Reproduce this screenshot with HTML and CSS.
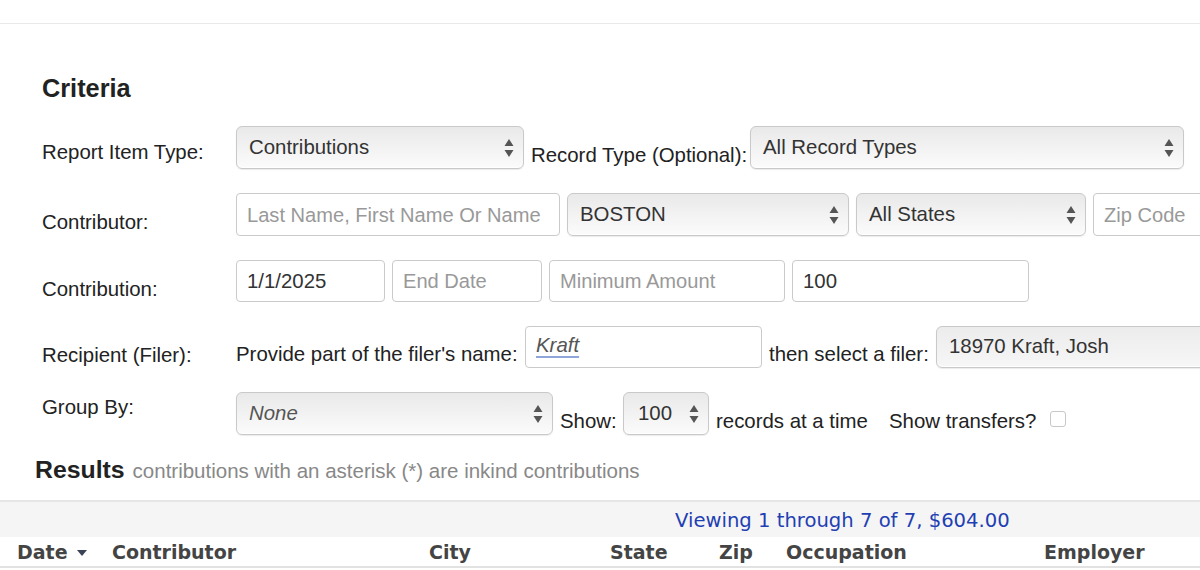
FILE: index.html
```html
<!DOCTYPE html>
<html>
<head>
<meta charset="utf-8">
<title>Criteria</title>
<link rel="stylesheet" href="styles.css">
</head>
<body>
<div class="topbar"></div>
<section class="criteria">
  <h2 class="title">Criteria</h2>

  <div class="row">
    <div class="label">Report Item Type:</div>
    <div class="sel w288"><span class="val">Contributions</span><svg class="arr" width="10" height="22" viewBox="0 0 10 22"><path d="M5 2 L9.5 9 L0.5 9 Z M5 20 L9.5 13 L0.5 13 Z" fill="#555"/></svg></div>
    <div class="txt t219">Record Type (Optional):</div>
    <div class="sel w434"><span class="val">All Record Types</span><svg class="arr" width="10" height="22" viewBox="0 0 10 22"><path d="M5 2 L9.5 9 L0.5 9 Z M5 20 L9.5 13 L0.5 13 Z" fill="#555"/></svg></div>
  </div>

  <div class="row">
    <div class="label lower">Contributor:</div>
    <div class="inp w324 ph">Last Name, First Name Or Name</div>
    <div class="sel w282"><span class="val">BOSTON</span><svg class="arr" width="10" height="22" viewBox="0 0 10 22"><path d="M5 2 L9.5 9 L0.5 9 Z M5 20 L9.5 13 L0.5 13 Z" fill="#555"/></svg></div>
    <div class="sel w230"><span class="val">All States</span><svg class="arr" width="10" height="22" viewBox="0 0 10 22"><path d="M5 2 L9.5 9 L0.5 9 Z M5 20 L9.5 13 L0.5 13 Z" fill="#555"/></svg></div>
    <div class="inp w160 ph">Zip Code</div>
  </div>

  <div class="row h42">
    <div class="label lower">Contribution:</div>
    <div class="inp w149">1/1/2025</div>
    <div class="inp w150 ph">End Date</div>
    <div class="inp w236 ph">Minimum Amount</div>
    <div class="inp w237">100</div>
  </div>

  <div class="row h42 r4">
    <div class="label lower">Recipient (Filer):</div>
    <div class="txt t289">Provide part of the filer's name:</div>
    <div class="inp w237"><span class="kraft">Kraft</span></div>
    <div class="txt t167">then select a filer:</div>
    <div class="sel flat w300"><span class="val">18970 Kraft, Josh</span></div>
  </div>

  <div class="row">
    <div class="label upper">Group By:</div>
    <div class="sel w317"><span class="val it">None</span><svg class="arr" width="10" height="22" viewBox="0 0 10 22"><path d="M5 2 L9.5 9 L0.5 9 Z M5 20 L9.5 13 L0.5 13 Z" fill="#555"/></svg></div>
    <div class="txt t63">Show:</div>
    <div class="sel w86 small"><span class="val">100</span><svg class="arr" width="10" height="22" viewBox="0 0 10 22"><path d="M5 2 L9.5 9 L0.5 9 Z M5 20 L9.5 13 L0.5 13 Z" fill="#555"/></svg></div>
    <div class="txt t173">records at a time</div>
    <div class="txt t161">Show transfers?</div>
    <div class="check"></div>
  </div>
</section>

<div class="results"><span class="rtitle">Results</span><span class="rsub">contributions with an asterisk (*) are inkind contributions</span></div>

<div class="band"><span class="viewing">Viewing 1 through 7 of 7, $604.00</span></div>

<div class="thead">
  <div class="th">Date <svg class="sort" width="10" height="6" viewBox="0 0 10 6"><path d="M0 0 L10 0 L5 6 Z" fill="#3a4358"/></svg></div>
  <div class="th">Contributor</div>
  <div class="th">City</div>
  <div class="th">State</div>
  <div class="th">Zip</div>
  <div class="th">Occupation</div>
  <div class="th">Employer</div>
</div>
</body>
</html>
```

FILE: styles.css
```css
html, body {
  margin: 0;
  padding: 0;
  background: #fff;
  overflow: hidden;
}
body {
  font-family: "Liberation Sans", Arial, Helvetica, sans-serif;
  color: #222;
  width: 1200px;
  height: 570px;
}
.topbar {
  height: 23px;
  border-bottom: 1px solid #e9e9e9;
}
.criteria {
  padding-left: 42px;
}
.title {
  margin: 49px 0 23px 0;
  font-size: 25.3px;
  line-height: 30px;
  font-weight: bold;
  color: #222;
}
.row {
  display: flex;
  align-items: flex-end;
  flex-wrap: nowrap;
  height: 43px;
  margin-bottom: 24px;
  white-space: nowrap;
  font-size: 20.4px;
}
.row.h42 { height: 42px; }
.row.r4 { margin-top: 1px; }
.label {
  width: 194px;
  flex: none;
  align-self: flex-start;
  line-height: 24px;
  padding-top: 14px;
  color: #222;
}
.label.lower { padding-top: 17px; }
.label.upper { padding-top: 3px; }
.txt {
  flex: none;
  line-height: 24px;
  margin: 0 0 2px 0;
  color: #222;
}
.t63 { width: 63px; }
.t161 { width: 161px; }
.t167 { width: 167px; }
.t173 { width: 173px; }
.t219 { width: 219px; }
.t289 { width: 289px; }
.sel {
  flex: none;
  box-sizing: border-box;
  height: 100%;
  display: flex;
  align-items: center;
  justify-content: space-between;
  padding: 0 9px 0 12px;
  border: 1px solid #c9c9c9;
  border-radius: 6px;
  background: linear-gradient(#e9e9e9, #f4f4f4 60%, #fbfbfb);
  box-shadow: inset 0 -1px 0 #fff, 0 1px 1px rgba(0, 0, 0, 0.08);
  margin-right: 7px;
  color: #333;
}
.sel .val { line-height: 24px; margin-top: -2px; }
.sel .it { font-style: italic; color: #555; }
.sel.flat {
  background: linear-gradient(#ececec, #f6f6f6);
}
.sel.small { padding-left: 14px; }
.arr { flex: none; }
.inp {
  flex: none;
  box-sizing: border-box;
  height: 100%;
  display: flex;
  align-items: center;
  padding: 0 10px;
  border: 1px solid #cacaca;
  border-radius: 4px;
  background: #fff;
  margin-right: 7px;
  color: #333;
  line-height: 24px;
}
.inp.ph { color: #999; font-size: 20.1px; }
.kraft {
  font-style: italic;
  color: #555;
  text-decoration: underline;
  text-decoration-color: #8ea6dc;
  text-underline-offset: 4px;
  text-decoration-thickness: 2px;
  margin-top: -4px;
}
.w86 { width: 86px; }
.w149 { width: 149px; }
.w150 { width: 150px; }
.w160 { width: 160px; }
.w230 { width: 230px; }
.w236 { width: 236px; }
.w237 { width: 237px; }
.w282 { width: 282px; }
.w288 { width: 288px; }
.w300 { width: 300px; }
.w317 { width: 317px; }
.w324 { width: 324px; }
.w434 { width: 434px; }
.check {
  flex: none;
  width: 16px;
  height: 16px;
  box-sizing: border-box;
  border: 1px solid #c8c8c8;
  border-radius: 3px;
  background: #fff;
  align-self: flex-start;
  margin-top: 19px;
}
.results {
  margin-top: -3px;
  padding-left: 35px;
  line-height: 28px;
  white-space: nowrap;
}
.rtitle {
  font-size: 24.8px;
  font-weight: bold;
  color: #222;
  margin-right: 8px;
}
.rsub {
  font-size: 20.5px;
  color: #888;
}
.band {
  margin-top: 13px;
  height: 35px;
  border-top: 2px solid #e6e6e6;
  background: #f5f5f5;
  padding-left: 675px;
  display: flex;
  align-items: center;
}
.viewing {
  font-family: "DejaVu Sans", Verdana, sans-serif;
  font-size: 19.6px;
  color: #1f3fb3;
  margin-top: 2px;
}
.thead {
  display: grid;
  grid-template-columns: 95px 317px 181px 109px 67px 258px 1fr;
  padding-left: 17px;
  height: 29px;
  align-items: center;
  border-bottom: 2px solid #e2e2e2;
  background: #fff;
}
.th {
  font-family: "DejaVu Sans", Verdana, sans-serif;
  font-weight: bold;
  font-size: 19px;
  color: #444;
  white-space: nowrap;
  display: flex;
  align-items: center;
}
.sort { margin-left: 9px; margin-top: 3px; }
```
